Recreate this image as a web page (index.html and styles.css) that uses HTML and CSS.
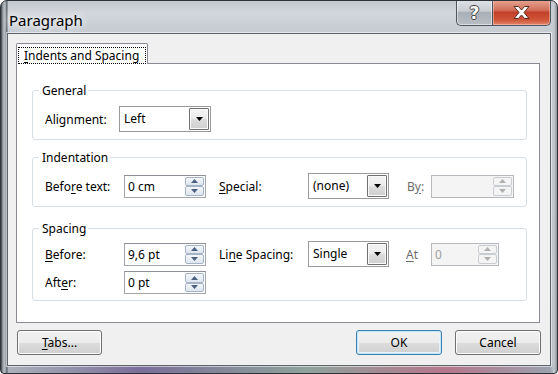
FILE: index.html
```html
<!DOCTYPE html>
<html lang="en">
  <head>
    <meta charset="UTF-8" />
    <meta name="viewport" content="width=device-width, initial-scale=1.0" />
    <title>Paragraph</title>
    <link rel="stylesheet" href="styles.css">
  </head>
  <body>
    <div class="window">
      <div class="titlebar">
        <span class="title">Paragraph</span>
        <div class="caption-buttons">
          <span class="cap-btn help">?</span>
          <span class="cap-btn close">
            <svg width="19" height="15" viewBox="0 0 19 15">
              <path d="M2 1.5 H6.5 L9.5 5 L12.5 1.5 H17 L12 7.5 L17 13.5 H12.5 L9.5 10 L6.5 13.5 H2 L7 7.5 Z" fill="#fff" stroke="#5a2a22" stroke-width="1" stroke-linejoin="round"/>
            </svg>
          </span>
        </div>
      </div>

      <div class="client">
        <div class="tab-strip">
          <div class="tab active"><span class="focus-rect"><u>I</u>ndents and Spacing</span></div>
        </div>

        <div class="tab-panel">
          <div class="group group-general">
            <div class="group-title">General</div>
            <div class="row">
              <span class="label label-align">Alignment:</span>
              <div class="combo combo-align">
                <span class="combo-value">Left</span>
                <span class="combo-btn"><svg width="7" height="4" viewBox="0 0 7 4"><path d="M0 0 H7 L3.5 4 Z" fill="#000"/></svg></span>
              </div>
            </div>
          </div>

          <div class="group group-indent">
            <div class="group-title">Indentation</div>
            <div class="row">
              <span class="label label-first">Befo<u>r</u>e text:</span>
              <div class="spinner spinner-main">
                <span class="spin-value">0 cm</span>
                <span class="spin-btns">
                  <span class="spin-btn"><svg width="7" height="4" viewBox="0 0 7 4"><path d="M0 4 H7 L3.5 0 Z"/></svg></span>
                  <span class="spin-btn"><svg width="7" height="4" viewBox="0 0 7 4"><path d="M0 0 H7 L3.5 4 Z"/></svg></span>
                </span>
              </div>
              <span class="label label-second"><u>S</u>pecial:</span>
              <div class="combo combo-small">
                <span class="combo-value">(none)</span>
                <span class="combo-btn"><svg width="7" height="4" viewBox="0 0 7 4"><path d="M0 0 H7 L3.5 4 Z" fill="#000"/></svg></span>
              </div>
              <span class="label label-third disabled-label">B<u>y</u>:</span>
              <div class="spinner spinner-by disabled">
                <span class="spin-value"></span>
                <span class="spin-btns">
                  <span class="spin-btn"><svg width="7" height="4" viewBox="0 0 7 4"><path d="M0 4 H7 L3.5 0 Z"/></svg></span>
                  <span class="spin-btn"><svg width="7" height="4" viewBox="0 0 7 4"><path d="M0 0 H7 L3.5 4 Z"/></svg></span>
                </span>
              </div>
            </div>
          </div>

          <div class="group group-spacing">
            <div class="group-title">Spacing</div>
            <div class="row">
              <span class="label label-first"><u>B</u>efore:</span>
              <div class="spinner spinner-main">
                <span class="spin-value">9,6 pt</span>
                <span class="spin-btns">
                  <span class="spin-btn"><svg width="7" height="4" viewBox="0 0 7 4"><path d="M0 4 H7 L3.5 0 Z"/></svg></span>
                  <span class="spin-btn"><svg width="7" height="4" viewBox="0 0 7 4"><path d="M0 0 H7 L3.5 4 Z"/></svg></span>
                </span>
              </div>
              <span class="label label-second">Li<u>n</u>e Spacing:</span>
              <div class="combo combo-small">
                <span class="combo-value">Single</span>
                <span class="combo-btn"><svg width="7" height="4" viewBox="0 0 7 4"><path d="M0 0 H7 L3.5 4 Z" fill="#000"/></svg></span>
              </div>
              <span class="label label-at disabled-label"><u>A</u>t</span>
              <div class="spinner spinner-at disabled">
                <span class="spin-value">0</span>
                <span class="spin-btns">
                  <span class="spin-btn"><svg width="7" height="4" viewBox="0 0 7 4"><path d="M0 4 H7 L3.5 0 Z"/></svg></span>
                  <span class="spin-btn"><svg width="7" height="4" viewBox="0 0 7 4"><path d="M0 0 H7 L3.5 4 Z"/></svg></span>
                </span>
              </div>
            </div>
            <div class="row row-after">
              <span class="label label-first">Aft<u>e</u>r:</span>
              <div class="spinner spinner-main">
                <span class="spin-value">0 pt</span>
                <span class="spin-btns">
                  <span class="spin-btn"><svg width="7" height="4" viewBox="0 0 7 4"><path d="M0 4 H7 L3.5 0 Z"/></svg></span>
                  <span class="spin-btn"><svg width="7" height="4" viewBox="0 0 7 4"><path d="M0 0 H7 L3.5 4 Z"/></svg></span>
                </span>
              </div>
            </div>
          </div>
        </div>

        <div class="footer">
          <button class="btn btn-tabs"><u>T</u>abs...</button>
          <div class="footer-right">
            <button class="btn btn-default">OK</button>
            <button class="btn">Cancel</button>
          </div>
        </div>
      </div>
    </div>
  </body>
</html>
```

FILE: styles.css
```css
body {
  margin: 0;
  font-family: "Noto Sans", "DejaVu Sans", sans-serif;
  font-size: 12px;
  color: #000;
  background: #fff;
}
u {
  text-decoration-thickness: 1px;
  text-underline-offset: 2px;
}

/* window frame (aero glass) */
.window {
  width: 558px;
  height: 374px;
  box-sizing: border-box;
  border: 1px solid #2e3338;
  border-radius: 7px 7px 4px 4px;
  background:
    linear-gradient(to right, #3d4247 0, #9ea5ac 2px, #b9bfc5 4px, #555b61 6px, transparent 7px),
    linear-gradient(to left, #8c939a 0, #c4c9ce 3px, transparent 7px),
    linear-gradient(to right, transparent 0, #7b6e9a 25%, #8fa39a 55%, #b5778a 80%, #9aa4b0 100%) bottom / 100% 8px no-repeat,
    linear-gradient(to bottom, #c3c8ce 0, #d3d7dc 12px, #c6ccd2 30px, #aeb5bc 100%);
  display: flex;
  flex-direction: column;
  overflow: hidden;
}
.titlebar {
  height: 32px;
  display: flex;
  justify-content: space-between;
  align-items: flex-start;
}
.title {
  font-size: 15px;
  line-height: 20px;
  margin: 9px 0 0 8px;
  text-shadow: 0 0 6px #fff, 0 0 10px #fff;
}
.caption-buttons {
  display: flex;
  margin-right: 6px;
  margin-top: -1px;
}
.cap-btn {
  height: 26px;
  box-sizing: border-box;
  border: 1px solid #4c5560;
  border-top: none;
  display: flex;
  align-items: center;
  justify-content: center;
}
.help {
  width: 36px;
  border-radius: 0 0 0 5px;
  border-right: none;
  background: linear-gradient(to bottom, #dfe2e5 0, #c8ccd1 45%, #a9afb6 50%, #b8bec4 100%);
  box-shadow: inset 0 0 0 1px rgba(255, 255, 255, 0.5);
  color: #fff;
  font-weight: bold;
  font-size: 17px;
  font-family: "DejaVu Sans", sans-serif;
  text-shadow: 1px 0 0 #444, -1px 0 0 #444, 0 1px 0 #444, 0 -1px 0 #444;
}
.close {
  width: 59px;
  border-radius: 0 0 5px 0;
  background: linear-gradient(to bottom, #e6a592 0, #d2705b 40%, #c2402a 50%, #cf5638 80%, #e2866c 100%);
  box-shadow: inset 0 0 0 1px rgba(255, 220, 210, 0.45);
}

/* client area */
.client {
  height: 333px;
  margin: 0 6px 0 6px;
  box-sizing: border-box;
  border: 1px solid #5d646c;
  box-shadow: 0 0 0 1px rgba(255, 255, 255, 0.55);
  background: #f0f0f0;
  padding: 9px 10px 0 8px;
}
.tab-strip {
  display: flex;
  height: 20px;
}
.tab {
  height: 21px;
  box-sizing: border-box;
  border: 1px solid #898c95;
  border-bottom: none;
  border-radius: 2px 2px 0 0;
  background: #fff;
  padding: 3px 2px 0 2px;
  position: relative;
  z-index: 1;
}
.focus-rect {
  display: block;
  outline: 1px dotted #000;
  outline-offset: 0;
  padding: 0 6px 0 5px;
  line-height: 15px;
  margin-top: 1px;
}
.tab-panel {
  height: 260px;
  box-sizing: border-box;
  border: 1px solid #898c95;
  background: #fff;
  padding: 19px 12px 0 15px;
}

/* group boxes */
.group {
  border: 1px solid #d5dfe5;
  border-radius: 3px;
  padding: 0 0 7px 12px;
}
.group-title {
  width: fit-content;
  background: #fff;
  margin: -8px 0 0 -6px;
  padding: 0 2px 0 3px;
  line-height: 15px;
}
.group-general {
  margin-top: 7px;
}
.group-indent {
  margin-top: 17px;
}
.group-spacing {
  margin-top: 21px;
  padding-bottom: 6px;
}
.row {
  display: flex;
  align-items: center;
  margin-top: 8px;
}
.group-spacing .row {
  margin-top: 5px;
}
.group-spacing .row-after {
  margin-top: 4px;
}
.label {
  flex: none;
}
.label-align {
  width: 74px;
}
.label-first {
  width: 79px;
}
.label-second {
  width: 89px;
  margin-left: 13px;
}
.label-third {
  width: 24px;
  margin-left: 18px;
}
.label-at {
  width: 25px;
  margin-left: 17px;
}
.disabled-label {
  color: #6d6d6d;
}

/* combo boxes */
.combo {
  height: 26px;
  box-sizing: border-box;
  border: 1px solid #9a9a9a;
  background: #fff;
  display: flex;
  align-items: stretch;
  padding: 1px;
}
.combo-align {
  width: 92px;
}
.combo-small {
  width: 81px;
}
.combo-value {
  flex: 1;
  line-height: 22px;
  padding-left: 3px;
}
.combo-btn {
  width: 20px;
  box-sizing: border-box;
  border: 1px solid #707070;
  border-radius: 1px;
  background: linear-gradient(to bottom, #f4f4f4 0, #ebebeb 50%, #dddddd 51%, #cfcfcf 100%);
  box-shadow: inset 0 0 0 1px #fafafa;
  display: flex;
  align-items: center;
  justify-content: center;
}

/* spinners */
.spinner {
  height: 23px;
  box-sizing: border-box;
  border: 1px solid #a3a6ad;
  border-top-color: #8e9197;
  background: #fff;
  display: flex;
  padding: 1px;
}
.spinner-main {
  width: 82px;
}
.spinner-by {
  width: 83px;
}
.spinner-at {
  width: 68px;
}
.spin-value {
  flex: 1;
  line-height: 19px;
  padding-left: 2px;
}
.spin-btns {
  width: 19px;
  display: flex;
  flex-direction: column;
}
.spin-btn {
  flex: 1;
  box-sizing: border-box;
  border: 1px solid #a4b3c6;
  border-radius: 2px;
  background: linear-gradient(to bottom, #f3f6fa 0, #dfe6ef 100%);
  display: flex;
  align-items: center;
  justify-content: center;
}
.spin-btn svg {
  fill: #4c6080;
}
.disabled {
  background: #f4f4f4;
  border-color: #b5b8bc;
}
.disabled .spin-value {
  color: #a0a0a0;
}
.disabled .spin-btn {
  border-color: #c9cdd2;
  background: #f4f4f4;
}
.disabled .spin-btn svg {
  fill: #b0b0b0;
}

/* footer buttons */
.footer {
  display: flex;
  justify-content: space-between;
  margin-top: 7px;
  margin-right: -1px;
}
.footer-right {
  display: flex;
  gap: 13px;
}
.btn {
  font: inherit;
  color: #000;
  height: 25px;
  width: 86px;
  padding: 0;
  border: 1px solid #707070;
  border-radius: 3px;
  background: linear-gradient(to bottom, #f2f2f2 0, #ebebeb 50%, #dddddd 51%, #cfcfcf 100%);
  box-shadow: inset 0 0 0 1px #fcfcfc;
}
.btn-tabs {
  margin-left: 1px;
  width: 85px;
}
.btn-default {
  border-color: #3c7fb1;
  box-shadow: inset 0 0 0 1px #c6e6f7, inset 0 0 0 2px #e6f3fb;
}
```
